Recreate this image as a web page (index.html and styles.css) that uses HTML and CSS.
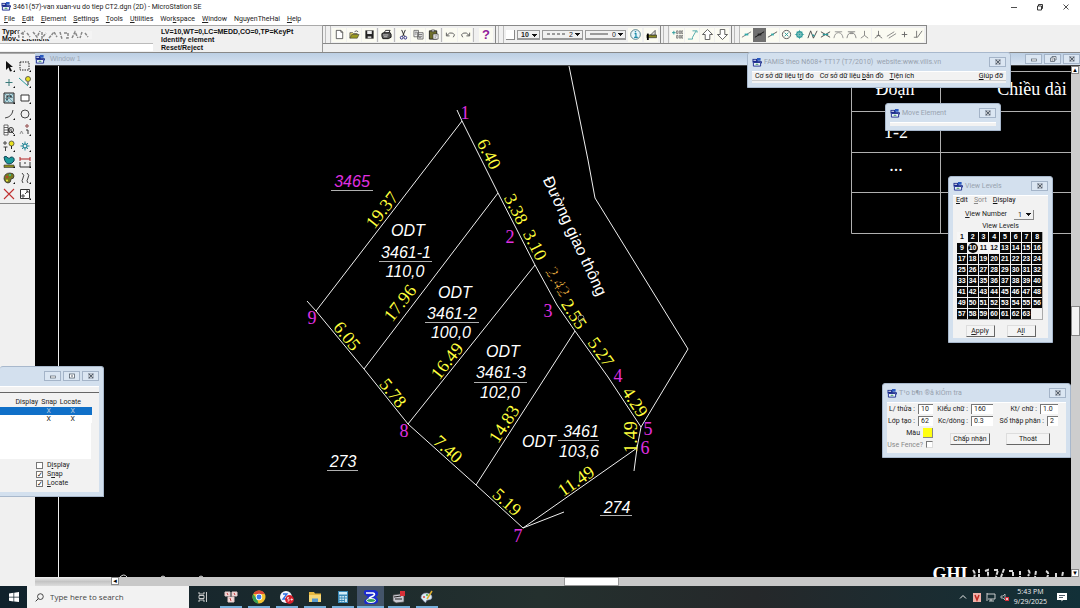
FILE: index.html
```html
<!DOCTYPE html>
<html lang="vi">
<head>
<meta charset="utf-8">
<title>3461(57)-van xuan-vu do tiep CT2.dgn (2D) - MicroStation SE</title>
<link rel="stylesheet" href="styles.css">
</head>
<body>
<svg class="defs" aria-hidden="true">
  <symbol id="logo" viewBox="0 0 10 10">
    <rect x="0" y="1" width="6" height="4" fill="#1a2a8c"/>
    <rect x="1" y="2" width="3" height="1" fill="#fff"/>
    <rect x="5" y="0" width="4" height="3" fill="#2a5ac0"/>
    <path d="M1 5h8v4H1z" fill="#e8eef8" stroke="#1a2a8c"/>
    <path d="M3 7.500l2-1.500 2 1.500z" fill="#2f9a50"/>
    <path d="M6 4h4v2" fill="none" stroke="#1a2a8c"/>
  </symbol>
  <symbol id="x" viewBox="0 0 8 8"><rect x="1.500" y="1.500" width="5" height="5" fill="#fff" stroke="#8a98a8" stroke-width=".6"/><path d="M2 2l4 4M6 2l-4 4" stroke="#56616e" stroke-width="1.100"/></symbol>
  <symbol id="min" viewBox="0 0 8 8"><rect x="1.500" y="4" width="5" height="2" fill="#fff" stroke="#56616e" stroke-width=".7"/></symbol>
  <symbol id="max" viewBox="0 0 8 8"><rect x="1.500" y="2" width="5" height="4" fill="#fff" stroke="#56616e" stroke-width=".8"/><path d="M3 4h2" stroke="#56616e"/></symbol>
  <symbol id="restore" viewBox="0 0 8 8"><path d="M3 3V1.500h4V5H5.500M1.500 3h4v3.500h-4z" fill="#fff" stroke="#56616e" stroke-width=".8"/><path d="M2.500 5h2" stroke="#56616e"/></symbol>
  <symbol id="corner" viewBox="0 0 16 16"><path d="M14 12v2h-2z" fill="#111"/></symbol>
</svg>

<div class="app">
  <header class="titlebar">
    <svg class="logo"><use href="#logo"/></svg>
    <h1 class="title">3461(57)-van xuan-vu do tiep CT2.dgn (2D) - MicroStation SE</h1>
    <button class="cap" aria-label="Minimize"><svg viewBox="0 0 8 8"><path d="M1 4.500h6" stroke="#222" stroke-width=".8"/></svg></button>
    <button class="cap" aria-label="Restore"><svg viewBox="0 0 8 8"><path d="M2.500 3V1.500h4v4H5.500M1.500 3h4v4h-4z" fill="none" stroke="#222" stroke-width=".9"/></svg></button>
    <button class="cap" aria-label="Close"><svg viewBox="0 0 8 8"><path d="M1.500 1.500l5 5M6.500 1.500l-5 5" stroke="#222" stroke-width=".8"/></svg></button>
  </header>

  <nav class="menubar">
    <button><u>F</u>ile</button><button><u>E</u>dit</button><button><u>E</u>lement</button><button><u>S</u>ettings</button><button><u>T</u>ools</button><button><u>U</u>tilities</button><button>Wor<u>k</u>space</button><button><u>W</u>indow</button><button>NguyenTheHai</button><button><u>H</u>elp</button>
  </nav>

  <div class="toolrow">
    <section class="command">
      <div class="keyin">
        <label for="keyin">Type:<br>Move Element</label>
        <svg class="noise" viewBox="0 0 76 12"><path d="M0 2h76v8H0z" fill="#f4f4f4"/><path d="M2 2l1 7M5 5l4-3M7 3v6M11 4l3 4M17 3l4 5 3-6M26 3v6l4-5M33 9l5-6 3 5M44 3l2 7M48 4h4v5h-3M56 9l3-6 3 6M66 3l-2 6M69 4l3 4" fill="none" stroke="#888" stroke-width="1.500" stroke-dasharray="3 1"/></svg>
        <input id="keyin" type="text">
      </div>
      <p class="status">LV=10,WT=0,LC=MEDD,CO=0,TP=KeyPt<br>Identify element<br>Reset/Reject</p>
    </section>
    <div class="bars">
      <div class="bar">
        <button aria-label="New"><svg viewBox="0 0 12 12"><path d="M2.500 1.500h5l2 2v7h-7zM7.500 1.500v2h2" fill="#fff" stroke="#333" stroke-width=".8"/></svg></button>
        <button aria-label="Open"><svg viewBox="0 0 12 12"><path d="M1 10V4h3l1 1h4v1" fill="#e8d860" stroke="#444" stroke-width=".8"/><path d="M1 10l2-4h8l-2 4z" fill="#9a9a20" stroke="#333" stroke-width=".6"/><path d="M6 3q2-2 4 0" fill="none" stroke="#333" stroke-width=".8"/></svg></button>
        <button aria-label="Save"><svg viewBox="0 0 12 12"><path d="M1.500 1.500h9v9h-9z" fill="#222"/><path d="M3.500 2h5v3.500h-5z" fill="#eee"/><path d="M4 8h4v2H4z" fill="#ccc"/></svg></button>
        <i></i>
        <button aria-label="Print"><svg viewBox="0 0 12 12"><path d="M3.500 4l1.500-2.500h5L8.500 4" fill="#fff" stroke="#222"/><path d="M1 5l2-1h7l1 2v3l-3 1.500H2L1 8z" fill="#555" stroke="#111"/><path d="M2 6.500h6M3 8.500h4" stroke="#eee" stroke-width=".8"/></svg></button>
        <i></i>
        <button aria-label="Cut"><svg viewBox="0 0 12 12"><path d="M4 1l3 7M8 1L5 8" stroke="#222" fill="none"/><circle cx="4" cy="9.500" r="1.500" fill="none" stroke="#22227c"/><circle cx="8" cy="9.500" r="1.500" fill="none" stroke="#22227c"/></svg></button>
        <button aria-label="Copy"><svg viewBox="0 0 12 12"><path d="M1 1.500h5v7H1zM5 4h6v7H5z" fill="#eee" stroke="#555" stroke-width=".8"/><path d="M2 3.500h3M2 5.500h2M6 6h4M6 8h4M6 9.500h3" stroke="#555" stroke-width=".8"/></svg></button>
        <button aria-label="Paste"><svg viewBox="0 0 12 12"><path d="M1.500 2h8v9h-8z" fill="#70702a" stroke="#222"/><path d="M4 1h3v2H4z" fill="#ddd" stroke="#222" stroke-width=".6"/><path d="M5.500 5.500h5.500V11H5.500z" fill="#fff" stroke="#333" stroke-width=".7"/><path d="M7 7.500h3M7 9h2" stroke="#555" stroke-width=".7"/></svg></button>
        <i></i>
        <button aria-label="Undo"><svg viewBox="0 0 12 12"><path d="M1.500 4v3.500H5M2 7q3-4 6.500-2.500T9 9" fill="none" stroke="#555"/></svg></button>
        <button aria-label="Redo"><svg viewBox="0 0 12 12"><path d="M10.500 4v3.500H7M10 7Q7 3 3.500 4.500T3 9" fill="none" stroke="#555"/></svg></button>
        <i></i>
        <button class="help" aria-label="Help">?</button>
      </div>
      <div class="bar attrs">
        <button class="swatch" aria-label="Color"></button>
        <select class="bold" aria-label="Level"><option>10</option></select>
        <label class="pick"><svg viewBox="0 0 20 4"><path d="M1 2h18" stroke="#444" stroke-dasharray="3 2"/></svg><select aria-label="Line style"><option>2</option></select></label>
        <label class="pick"><svg viewBox="0 0 20 4"><path d="M1 2h18" stroke="#444"/></svg><select aria-label="Line weight"><option>0</option></select></label>
        <button aria-label="Information"><svg viewBox="0 0 12 12"><circle cx="6" cy="6" r="5.300" fill="#e8f6fa" stroke="#2a5a6a" stroke-width=".8"/><path d="M5 5h1.500v4M4.500 9.200h4" stroke="#1a8aa8" stroke-width="1.300" fill="none"/><circle cx="6" cy="3" r=".9" fill="#1a8aa8"/></svg></button>
        <button aria-label="Match"><svg viewBox="0 0 12 12"><path d="M1 6.500h10.500v3H1z" fill="#8a8a20" stroke="#222" stroke-width=".7"/><path d="M5 6.500l5-5v5z" fill="#ddd" stroke="#333" stroke-width=".8"/><path d="M2 5v7" stroke="#000" stroke-width="2"/></svg></button>
      </div>
      <div class="bar draw">
        <button aria-label="Point list"><svg viewBox="0 0 12 12"><path d="M0 4h4M2 2v4" stroke="#2a9a9a"/><path d="M5 2h1.500v3H5zM8 2h1.500v3H8zM10.500 2H12v3h-1.500zM5 7h1.500v3H5zM8 7h1.500v3H8zM10.500 7H12v3h-1.500z" fill="none" stroke="#555" stroke-width=".7"/></svg></button>
        <button aria-label="Path"><svg viewBox="0 0 12 12"><path d="M1 11h5v-2M6 9l4-7M6 2h5v2" fill="none" stroke="#4aa8a8"/></svg></button>
        <button aria-label="Level up"><svg viewBox="0 0 12 12"><path d="M6 .5L11.500 6H8.500v5.500h-5V6H.5z" fill="#fff" stroke="#444" stroke-width=".9"/></svg></button>
        <button aria-label="Level down"><svg viewBox="0 0 12 12"><path d="M6 11.500L11.500 6H8.500V.5h-5V6H.5z" fill="#fff" stroke="#444" stroke-width=".9"/></svg></button>
      </div>
      <div class="bar snaps">
        <button aria-label="Nearest"><svg viewBox="0 0 12 12"><path d="M1 9l10-6" stroke="#777"/><path d="M4 6h4" stroke="#3aa" stroke-width="2"/></svg></button>
        <button class="on" aria-label="Keypoint"><svg viewBox="0 0 12 12"><path d="M1 9l10-6" stroke="#111"/><path d="M4 6h4" stroke="#222" stroke-width="2"/></svg></button>
        <button aria-label="Midpoint"><svg viewBox="0 0 12 12"><path d="M1 9l10-6" stroke="#555"/><path d="M4.500 6h3" stroke="#3aa" stroke-width="2"/></svg></button>
        <button aria-label="Center"><svg viewBox="0 0 12 12"><circle cx="6" cy="6" r="4.500" fill="none" stroke="#555"/><path d="M4 4l4 4M8 4L4 8" stroke="#2a9a9a"/></svg></button>
        <button aria-label="Origin"><svg viewBox="0 0 12 12"><circle cx="6" cy="6" r="3" fill="none" stroke="#2a9a9a" stroke-width="1.400"/><path d="M6 1v10M1 6h10M3 3l6 6M9 3L3 9" stroke="#2a9a9a" stroke-width=".7"/></svg></button>
        <button aria-label="Bisector"><svg viewBox="0 0 12 12"><path d="M1 10l3-8 3 8 4-8" fill="none" stroke="#444"/><path d="M6 6l2 2" stroke="#2a9a9a" stroke-width="1.500"/></svg></button>
        <button aria-label="Intersection"><svg viewBox="0 0 12 12"><path d="M1 3l10 6M1 9l10-6" stroke="#444"/><path d="M3 6h6" stroke="#2a9a9a" stroke-width="1.500"/></svg></button>
        <button aria-label="Tangent"><svg viewBox="0 0 12 12"><path d="M2 3h8M1 10q1-6 5-6t5 6" fill="none" stroke="#888" stroke-width=".9"/></svg></button>
        <button aria-label="Tangent from"><svg viewBox="0 0 12 12"><path d="M2 3h8M1 10q1-6 5-6t5 6M4 5h4" fill="none" stroke="#777" stroke-width=".9"/></svg></button>
        <button aria-label="Perpendicular"><svg viewBox="0 0 12 12"><path d="M6 2v5M6 7l-4 3M6 7l4 3" stroke="#777" stroke-width=".9"/></svg></button>
        <button aria-label="Perpendicular from"><svg viewBox="0 0 12 12"><path d="M6 2v5M6 7l-4 3M6 7l4 3M4 7h4" stroke="#666" stroke-width=".9"/></svg></button>
        <button aria-label="Parallel"><svg viewBox="0 0 12 12"><path d="M1 8l8-5M3 10l8-5" stroke="#777" stroke-width=".9"/></svg></button>
        <button aria-label="Through point"><svg viewBox="0 0 12 12"><path d="M6 3v6M3 6h6" stroke="#666"/></svg></button>
        <button aria-label="Point on"><svg viewBox="0 0 12 12"><path d="M2 9h4M5 2v7M6 9l5-7" stroke="#666" stroke-width=".9"/></svg></button>
      </div>
    </div>
  </div>

  <main class="work">
    <aside class="palette">
      <div class="tools">
        <button aria-label="Element selection"><svg viewBox="0 0 16 16"><path d="M5 3l7 6H9l2 4-2 .5-1.500-4L5 12z" fill="#111"/><use href="#corner"/></svg></button>
        <button aria-label="Fence"><svg viewBox="0 0 16 16"><path d="M3 4h9v8H3z" fill="none" stroke="#222" stroke-dasharray="1.500 1"/><use href="#corner"/></svg></button>
        <button aria-label="Points"><svg viewBox="0 0 16 16"><path d="M8 5v7M4.500 8.500h7" stroke="#3a7a7a"/><use href="#corner"/></svg></button>
        <button aria-label="Linear"><svg viewBox="0 0 16 16"><path d="M2 4l9 8" stroke="#2a9a9a"/><circle cx="11" cy="5" r="2.500" fill="#e8e020" stroke="#444" stroke-width=".8"/><path d="M11 8v3" stroke="#222"/><use href="#corner"/></svg></button>
        <button aria-label="Patterns"><svg viewBox="0 0 16 16"><path d="M3 3h10v10H3z" fill="#bcd8de" stroke="#222"/><path d="M4 4l8 8M4 8l4 4M8 4l4 4M12 4l-8 8" stroke="#4a8a9a" stroke-width=".7"/><path d="M6 10V6h4v2" fill="none" stroke="#222"/><use href="#corner"/></svg></button>
        <button aria-label="Polygons"><svg viewBox="0 0 16 16"><path d="M4 5h8v6H4z" fill="#fff" stroke="#333"/><use href="#corner"/></svg></button>
        <button aria-label="Arcs"><svg viewBox="0 0 16 16"><path d="M4 12q7-1 8-8" fill="none" stroke="#444"/><use href="#corner"/></svg></button>
        <button aria-label="Ellipses"><svg viewBox="0 0 16 16"><circle cx="8" cy="8" r="4" fill="none" stroke="#444"/><use href="#corner"/></svg></button>
        <button aria-label="Tags"><svg viewBox="0 0 16 16"><path d="M3 3h4v10H3zM3 5.500h4M3 8h4M3 10.500h4" fill="#fff" stroke="#444" stroke-width=".8"/><circle cx="10" cy="8" r="2.500" fill="none" stroke="#333"/><path d="M8 6v5M10 7v2l3 3" stroke="#333" fill="none"/><use href="#corner"/></svg></button>
        <button aria-label="Text"><svg viewBox="0 0 16 16"><path d="M3 12l1.500-3L6 12" fill="none" stroke="#777" stroke-width=".8"/><circle cx="10" cy="4" r="1.200" fill="none" stroke="#8a3a3a"/><path d="M9 8h2v4" stroke="#333" fill="none"/><use href="#corner"/></svg></button>
        <button aria-label="Groups"><svg viewBox="0 0 16 16"><path d="M4 3v4M2.500 9h4M4.500 9v4M2 5h4" stroke="#444"/><circle cx="10.500" cy="5.500" r="2.500" fill="#e8e020" stroke="#444" stroke-width=".8"/><path d="M10.500 8v3" stroke="#222"/><use href="#corner"/></svg></button>
        <button aria-label="Cells"><svg viewBox="0 0 16 16"><circle cx="8" cy="8" r="2" fill="none" stroke="#2a8a9a" stroke-width="1.300"/><path d="M8 3.500v2M8 10.500v2M3.500 8h2M10.500 8h2M5 5l1 1M11 5l-1 1M5 11l1-1M11 11l-1-1" stroke="#2a8a9a"/><use href="#corner"/></svg></button>
        <button aria-label="Measure"><svg viewBox="0 0 16 16"><path d="M3 3q2-2 4 1 1 1 3-1 4 0 3 4-2 3-5 3-4 0-5-7z" fill="#1a9a9a" stroke="#145"/><path d="M3 11h10v2.500H3z" fill="#8a8a20" stroke="#333" stroke-width=".6"/><use href="#corner"/></svg></button>
        <button aria-label="Dimension"><svg viewBox="0 0 16 16"><path d="M3 3v4M13 3v4M3 5h10" stroke="#b02020"/><path d="M3 8v5h10V8M8 8v2" fill="none" stroke="#333"/><use href="#corner"/></svg></button>
        <button aria-label="Change attributes"><svg viewBox="0 0 16 16"><path d="M3 9q0-6 6-6 4 0 4 3t-3 3q0 4-3 4T3 9z" fill="#7a7a20" stroke="#333" stroke-width=".8"/><circle cx="6" cy="7" r="1" fill="#c33"/><circle cx="9" cy="5" r="1" fill="#3c9"/><circle cx="6" cy="10.500" r="1" fill="#ee4"/><use href="#corner"/></svg></button>
        <button aria-label="Manipulate"><svg viewBox="0 0 16 16"><path d="M5 3q3 2 1 5t0 5M10 3q3 2 1 5t0 5" fill="none" stroke="#444"/><use href="#corner"/></svg></button>
        <button aria-label="Delete"><svg viewBox="0 0 16 16"><path d="M3 3l10 10M13 3L3 13" stroke="#c03030" stroke-width="1.100"/></svg></button>
        <button aria-label="Modify"><svg viewBox="0 0 16 16"><path d="M3.500 3.500h9v9h-9z" fill="#fff" stroke="#333"/><path d="M5 11h2V9H5zM8 8l3-3M9 5h2v2" fill="none" stroke="#333" stroke-width=".9"/><use href="#corner"/></svg></button>
      </div>
    </aside>

    <section class="view">
      <header class="viewbar">
        <svg class="logo"><use href="#logo"/></svg>
        <h2>Window 1</h2>
        <button class="wbtn" aria-label="Minimize"><svg><use href="#min"/></svg></button>
        <button class="wbtn" aria-label="Restore"><svg><use href="#restore"/></svg></button>
        <button class="wbtn" aria-label="Close"><svg><use href="#x"/></svg></button>
      </header>
      <div class="pane">
        <svg class="canvas" viewBox="35 66 1036 511" preserveAspectRatio="xMinYMin slice">
          <g class="lines">
            <path d="M58.500 66V577"/>
            <path d="M457 110L462 121L498 193L535 265L557 305L575 331L608 377L641 427L637 448L634 471"/>
            <path d="M569 66L588 160L595 198L688 349L641 427"/>
            <path d="M637 448L523 528L564 512M523 528L476 485L408 424L364 369L316 311L307 301"/>
            <path d="M462 121L316 311M498 193L364 369M535 265L408 424M575 331L476 485"/>
          </g>
          <g class="rules">
            <path d="M851.500 66V233.500H1071M940.500 66V233M851 71.500H1071M851 111.500H1071M851 152.500H1071M851 192.500H1071"/>
            <path d="M331 190.500H373M379 261.500H432M425 322.500H479M474 382.500H527M558 440.500H599M327 470.500H358M600 515.500H632"/>
          </g>
          <g class="dist">
            <text transform="translate(489 154) rotate(63)">6.40</text>
            <text transform="translate(516 209) rotate(63)">3.38</text>
            <text transform="translate(535 245) rotate(63)">3.10</text>
            <text class="faint" transform="translate(558 282) rotate(60)">2.42</text>
            <text transform="translate(574 314) rotate(57)">2.55</text>
            <text transform="translate(601 352) rotate(54)">5.27</text>
            <text transform="translate(635 402) rotate(57)">4.29</text>
            <text transform="translate(631 437) rotate(-90)">1.49</text>
            <text transform="translate(576 481) rotate(-35)">11.49</text>
            <text transform="translate(507 502) rotate(42)">5.19</text>
            <text transform="translate(448 449) rotate(42)">7.40</text>
            <text transform="translate(393 393) rotate(51)">5.78</text>
            <text transform="translate(347 336) rotate(51)">6.05</text>
            <text transform="translate(382 210) rotate(-52)">19.37</text>
            <text transform="translate(400 303) rotate(-52)">17.96</text>
            <text transform="translate(447 361) rotate(-52)">16.49</text>
            <text transform="translate(504 424) rotate(-57)">14.83</text>
          </g>
          <circle cx="581" cy="318" r="3" fill="none" stroke="#aaa" stroke-width=".7"/>
          <g class="points">
            <text x="465" y="119">1</text><text x="510" y="243">2</text><text x="548" y="317">3</text>
            <text x="618" y="382">4</text><text x="648" y="435">5</text><text x="645" y="454">6</text>
            <text x="518" y="542">7</text><text x="404" y="437">8</text><text x="312" y="324">9</text>
          </g>
          <g class="parcels">
            <text class="magenta" x="352" y="187">3465</text>
            <text x="408" y="236">ODT</text><text x="406" y="258">3461-1</text><text x="405" y="277">110,0</text>
            <text x="455" y="298">ODT</text><text x="452" y="319">3461-2</text><text x="451" y="338">100,0</text>
            <text x="503" y="357">ODT</text><text x="501" y="378">3461-3</text><text x="500" y="398">102,0</text>
            <text x="539" y="447">ODT</text><text x="581" y="437">3461</text><text x="579" y="457">103,6</text>
            <text x="343" y="467">273</text><text x="617" y="513">274</text>
          </g>
          <text class="road" transform="translate(575 236) rotate(65)">Đường giao thông</text>
          <g class="table">
            <text x="895" y="95">Đoạn</text><text x="1032" y="95">Chiều dài</text>
            <text x="896" y="138">1-2</text><text x="896" y="171">...</text>
            <text class="strong" x="950" y="580">GHI</text>
          </g>
          <path d="M973 570q3 4 1 7M979 569v8M985 571l3-1v7M994 570h4l-2 7M1004 569l-3 8M1009 571h4v6M1020 571v6M1028 570q3 2 0 6M1036 571l-1 6M1046 571q4 2 1 6M1056 573v4M1063 572l-1 5" fill="none" stroke="#d8d8d8" stroke-width="2" stroke-dasharray="4 1"/>
          <path d="M120 577q4-4 7 0M161 577q2-2 4 0M199 577q2-2 4 0" fill="none" stroke="#ddd"/>
        </svg>
        <div class="vscroll"><button aria-label="Scroll up">▴</button><span></span><button aria-label="Scroll down">▾</button></div>
        <div class="hscroll"><b class="viewctl"></b><button aria-label="Scroll left">◂</button><span></span></div>
      </div>
    </section>
  </main>

  <footer class="taskbar">
    <button class="start" aria-label="Start"><svg viewBox="0 0 10 10"><path d="M0 1.500l4.500-.7v4H0zM5.200.7L10 0v4.800H5.200zM0 5.400h4.500v4L0 8.700zM5.200 5.400H10V10l-4.800-.6z" fill="#fff"/></svg></button>
    <label class="search"><svg viewBox="0 0 10 10"><circle cx="6" cy="4" r="3.200" fill="none" stroke="#222" stroke-width=".9"/><path d="M3.700 6.300L.7 9.300" stroke="#222"/></svg><input type="text" placeholder="Type here to search" aria-label="Type here to search"></label>
    <button class="tview" aria-label="Task view"><svg viewBox="0 0 10 10"><path d="M1 0v2h5V0M1 10V8h5v2M1 3.500h5v3H1zM8.500 0v10" fill="none" stroke="#ddd" stroke-width=".9"/></svg></button>
    <div class="apps">
      <button aria-label="UniKey"><svg viewBox="0 0 14 14"><path d="M1 2h5v4H1zM8 2h5v4H8zM4 7h6v5H4z" fill="#f4dcdc" stroke="#e4c8c8"/><path d="M3 3l1 2M10 3l1 2M6 8l1 3" stroke="#c03a3a"/></svg></button>
      <button aria-label="Chrome"><svg viewBox="0 0 14 14"><circle cx="7" cy="7" r="6.500" fill="#f2c230"/><path d="M1.300 4A6.500 6.500 0 0 1 12.800 4H7z" fill="#dc4a38"/><path d="M1.300 4L5 9l1.500 4.500A6.500 6.500 0 0 1 1.300 4z" fill="#35a055"/><circle cx="7" cy="7" r="3.200" fill="#fff"/><circle cx="7" cy="7" r="2.400" fill="#3b7ded"/></svg></button>
      <button aria-label="Zalo"><svg viewBox="0 0 14 14"><circle cx="6" cy="7" r="6" fill="#f2f6ff"/><path d="M3 4h4L3 9h4" fill="none" stroke="#2a6ae0" stroke-width="1.300"/><circle cx="9.500" cy="9.500" r="4.400" fill="#d8202c"/><path d="M9 7.500H7.500V9H9v2H7.500M10.500 9.500h2.500M11.700 8.300v2.400" stroke="#fff" stroke-width=".7" fill="none"/></svg></button>
      <button aria-label="File Explorer"><svg viewBox="0 0 14 14"><path d="M1 2h5l1 1.500h6V12H1z" fill="#e8b840"/><path d="M1 5h12v7H1z" fill="#f8d878"/><path d="M4 8.500h6V12H4z" fill="#5a9ad0"/></svg></button>
      <button aria-label="Calculator"><svg viewBox="0 0 14 14"><path d="M2 1h10v12H2z" fill="#3a8ab8"/><path d="M3 2h8v2.500H3z" fill="#d0ecf8"/><path d="M3.500 6h2v1.500h-2zM6.200 6h2v1.500h-2zM9 6h2v1.500H9zM3.500 8.500h2V10h-2zM6.200 8.500h2V10h-2zM9 8.500h2V12H9zM3.500 11h2v1h-2zM6.200 11h2v1h-2z" fill="#c8e4f0"/></svg></button>
      <button class="active" aria-label="MicroStation"><svg viewBox="0 0 14 14"><path d="M2 0h9l3 2v3l-2 2 2 2v3l-3 2H1L0 11l4-4-4-3V1z" fill="#1a2ad0"/><path d="M2 3h7q3 1 0 3L5 8" fill="none" stroke="#fff" stroke-width="1.600"/><ellipse cx="7" cy="10.500" rx="4.500" ry="2" fill="#35a055" stroke="#fff"/></svg></button>
      <button aria-label="Recorder"><svg viewBox="0 0 14 14"><path d="M1 5l7-1 4 2v6l-8 1-3-2z" fill="#c8c8d0" stroke="#444" stroke-width=".7"/><path d="M2 7l7-1M3 9h7" stroke="#222"/><path d="M8 1h5v5H8z" fill="#d83038"/></svg></button>
      <button aria-label="Paint"><svg viewBox="0 0 14 14"><path d="M1 8q0-5 6-5 5 1 5 4t-4 3q-2 0-2 2T1 8z" fill="#d8ecf4" stroke="#88a" stroke-width=".6"/><circle cx="4" cy="7" r="1" fill="#d44"/><circle cx="7" cy="5" r="1" fill="#4a4"/><path d="M7 9l5-8" stroke="#e0b030" stroke-width="1.500"/></svg></button>
    </div>
    <div class="tray">
      <svg viewBox="0 0 10 10"><path d="M2 6.500l3-3 3 3" fill="none" stroke="#eee"/></svg>
      <svg viewBox="0 0 10 10"><rect x="1" y="1" width="8" height="9" fill="#f0b0a8"/><path d="M3 3l2 5 2-5" fill="none" stroke="#c02820" stroke-width="1.500"/></svg>
      <svg viewBox="0 0 10 10"><path d="M1 1v8M1 2h8v5H2M5 7v2M3 9h5" fill="none" stroke="#ddd" stroke-width=".9"/></svg>
      <svg viewBox="0 0 10 10"><path d="M1 4h2l2-2v6L3 6H1z" fill="none" stroke="#ccc" stroke-width=".8"/><rect x="5" y="5" width="4" height="4" fill="#d8303c"/><path d="M6 6l2 2M8 6L6 8" stroke="#fff" stroke-width=".7"/></svg>
      <time>5:43 PM<br>9/29/2025</time>
      <svg viewBox="0 0 10 10"><path d="M0 1h10v7H6L4.500 9.500V8H0z" fill="#fff"/><path d="M2 3.500h6M2 5.500h4" stroke="#234" stroke-width=".8"/></svg>
    </div>
  </footer>

  <section class="win famis">
    <header><svg class="logo"><use href="#logo"/></svg><h2>FAMIS theo N608+ TT17 (T7/2010)&nbsp; website:www.vilis.vn</h2><button class="wbtn" aria-label="Close"><svg><use href="#x"/></svg></button></header>
    <div class="body">
      <nav class="wmenu"><button>Cơ sở dữ liệu t<u>r</u>ị đo</button><button>Cơ sở dữ liệu <u>b</u>ản đồ</button><button><u>T</u>iện ích</button><button class="end"><u>G</u>iúp đỡ</button></nav>
    </div>
  </section>

  <section class="win move">
    <header><svg class="logo"><use href="#logo"/></svg><h2>Move Element</h2><button class="wbtn" aria-label="Close"><svg><use href="#x"/></svg></button></header>
    <div class="body"></div>
  </section>

  <section class="win levels">
    <header><svg class="logo"><use href="#logo"/></svg><h2>View Levels</h2><button class="wbtn" aria-label="Close"><svg><use href="#x"/></svg></button></header>
    <div class="body">
      <nav class="wmenu"><button><u>E</u>dit</button><button class="off"><u>S</u>ort</button><button><u>D</u>isplay</button></nav>
      <div class="vnum"><label for="vn"><u>V</u>iew Number</label><select id="vn"><option>1</option></select></div>
      <h3>View Levels</h3>
      <div class="grid">
        <button class="clear">1</button><button>2</button><button>3</button><button>4</button><button>5</button><button>6</button><button>7</button><button>8</button>
        <button>9</button><button class="current">10</button><button class="clear">11</button><button class="clear">12</button><button>13</button><button>14</button><button>15</button><button>16</button>
        <button>17</button><button>18</button><button>19</button><button>20</button><button>21</button><button>22</button><button>23</button><button>24</button>
        <button>25</button><button>26</button><button>27</button><button>28</button><button>29</button><button>30</button><button>31</button><button>32</button>
        <button>33</button><button>34</button><button>35</button><button>36</button><button>37</button><button>38</button><button>39</button><button>40</button>
        <button>41</button><button>42</button><button>43</button><button>44</button><button>45</button><button>46</button><button>47</button><button>48</button>
        <button>49</button><button>50</button><button>51</button><button>52</button><button>53</button><button>54</button><button>55</button><button>56</button>
        <button>57</button><button>58</button><button>59</button><button>60</button><button>61</button><button>62</button><button>63</button>
      </div>
      <div class="actions"><button class="push"><u>A</u>pply</button><button class="push">A<u>l</u>l</button></div>
    </div>
  </section>

  <section class="win label">
    <header><svg class="logo"><use href="#logo"/></svg><h2>T¹o b¶n ®å kiÓm tra</h2><button class="wbtn" aria-label="Close"><svg><use href="#x"/></svg></button></header>
    <form class="body">
      <div class="col">
        <label>L/ thửa :<input type="text" value="10"></label>
        <label>Lớp tạo :<input type="text" value="62"></label>
        <label>Màu<button type="button" class="yellow" aria-label="Màu"></button></label>
        <label class="off">Use Fence?<input type="checkbox"></label>
      </div>
      <div class="col mid">
        <label>Kiểu chữ :<input type="text" value="160"></label>
        <label>Kc/dòng :<input type="text" value="0.3"></label>
        <button type="button" class="push">Chấp nhận</button>
      </div>
      <div class="col last">
        <label>Kt/ chữ :<input type="text" value="1.0"></label>
        <label>Số thập phân :<input type="text" value="2"></label>
        <button type="button" class="push">Thoát</button>
      </div>
    </form>
  </section>

  <section class="win refs">
    <header><button class="wbtn" aria-label="Minimize"><svg><use href="#min"/></svg></button><button class="wbtn" aria-label="Maximize"><svg><use href="#max"/></svg></button><button class="wbtn" aria-label="Close"><svg><use href="#x"/></svg></button></header>
    <div class="body">
      <table>
        <thead><tr><th>Display</th><th>Snap</th><th>Locate</th></tr></thead>
        <tbody>
          <tr class="sel"><td></td><td>X</td><td>X</td></tr>
          <tr><td></td><td>X</td><td>X</td></tr>
        </tbody>
      </table>
      <div class="checks">
        <label><input type="checkbox"><span>D<u>i</u>splay</span></label>
        <label><input type="checkbox" checked><span>S<u>n</u>ap</span></label>
        <label><input type="checkbox" checked><span><u>L</u>ocate</span></label>
      </div>
    </div>
  </section>
</div>
</body>
</html>
```
FILE: styles.css
```css
* { box-sizing: border-box; }

body {
  margin: 0;
  font: 7px/8px "Liberation Sans", Arial, sans-serif;
  color: #222;
}

button, input, select {
  margin: 0;
  padding: 0;
  border: 0;
  border-radius: 0;
  background: none;
  color: inherit;
  font: inherit;
}

select { appearance: none; }
h1, h2, h3, p { margin: 0; font: inherit; }
svg { display: block; }
u { text-underline-offset: 1px; text-decoration-thickness: 1px; }
.defs { position: absolute; width: 0; height: 0; }

.app {
  position: relative;
  display: flex;
  flex-direction: column;
  height: 100vh;
  overflow: hidden;
  background: #f0f0f0;
}

.logo { flex: none; width: 10px; height: 9px; }

/* title and menu */
.titlebar {
  display: flex;
  flex: none;
  align-items: center;
  height: 13px;
  padding: 0 8px 0 1px;
  gap: 2px;
  background: #fff;
}
.title { flex: 1; font-family: Roboto, sans-serif; white-space: nowrap; }
.cap { width: 10px; margin-left: 14px; }
.cap svg { width: 8px; height: 8px; }

.menubar {
  display: flex;
  flex: none;
  height: 12px;
  padding: 0 4px;
  gap: 7px;
  background: #fff;
  font-family: Roboto, sans-serif;
}

/* command window and tool bars */
.toolrow { display: flex; flex: none; height: 28px; border-bottom: 1px solid #888; }
.command {
  display: flex;
  flex: none;
  width: 323px;
  border-top: 1px solid #aaa;
  border-right: 1px solid #999;
  font-weight: bold;
  color: #111;
}
.keyin { position: relative; width: 153px; }
.keyin label { display: block; height: 17px; padding: 2px; line-height: 7px; }
.keyin input { display: block; width: 100%; height: 8px; background: #fff; border-top: 1px solid #bbb; }
.noise { position: absolute; left: 16px; top: 3px; width: 76px; height: 12px; }
.status { padding: 2px 8px; white-space: nowrap; }

.bars {
  display: flex;
  flex: 1;
  height: 19px;
  margin-right: 153px;
  border: solid #888;
  border-width: 1px 0;
}
.bar {
  display: flex;
  flex: none;
  align-items: center;
  gap: 1px;
  height: 17px;
  padding: 0 2px;
  border-right: 1px solid #888;
}
.bar::before { content: ""; width: 4px; height: 17px; border: solid #bbb; border-width: 0 1px; }
.bar button { display: grid; place-items: center; width: 14px; height: 14px; background: #fbfbf2; }
.bar > button svg { width: 11px; height: 11px; }
.bar i { width: 1px; height: 14px; background: #bbb; }
.bar .help { color: #90209a; font: bold 13px/14px "Liberation Sans", sans-serif; margin-left: 4px; }
.attrs { gap: 2px; }
.bar .swatch { width: 9px; height: 10px; background: #fff; border: solid #888; border-width: 0 1px 1px 0; }
.attrs > select, .pick {
  display: flex;
  align-items: center;
  width: 23px;
  height: 10px;
  padding-left: 3px;
  border: 1px solid #999;
  border-bottom-width: 2px;
}
.attrs > select, .pick select, .vnum select {
  background-image: linear-gradient(#111, #111), linear-gradient(#111, #111), linear-gradient(#111, #111);
  background-size: 5px 1px, 3px 1px, 1px 1px;
  background-position: right 2px top 3px, right 3px top 4px, right 4px top 5px;
  background-repeat: no-repeat;
}
.attrs .bold { font-weight: bold; }
.pick { width: 41px; }
.pick svg { width: 20px; height: 4px; }
.pick select { flex: 1; height: 8px; padding-left: 3px; line-height: 7px; }
.snaps { gap: 0; flex: 1; justify-content: space-between; }
.snaps button { width: 13px; flex-shrink: 1; }
.snaps .on { background: #707070; }

/* work area */
.work { display: flex; flex: 1; min-height: 0; }
.palette { flex: none; width: 35px; }
.tools { display: grid; grid-template-columns: 16px 16px; padding: 4px 1px 1px; border-top: 1px solid #aaa; border-bottom: 1px solid #888; }
.tools button { height: 16px; }
.tools svg { width: 16px; height: 16px; }

.view { display: flex; flex-direction: column; flex: 1; min-width: 0; }
.viewbar {
  display: flex;
  flex: none;
  align-items: center;
  gap: 2px;
  height: 13px;
  background: linear-gradient(#bccfe4, #d6e2f0);
  border-bottom: 1px solid #444;
  color: #9aa6b4;
}
.viewbar h2 { flex: 1; padding-left: 3px; }
.wbtn {
  display: grid;
  place-items: center;
  flex: none;
  width: 17px;
  height: 10px;
  border: 1px solid #a4b4c8;
  background: #dbe6f2;
}
.wbtn svg { width: 8px; height: 8px; }

.pane { display: grid; grid-template: 1fr 9px / 1fr 9px; flex: 1; min-height: 0; }
.canvas { width: 100%; height: 100%; min-height: 0; background: #000; overflow: hidden; }
.vscroll { display: flex; flex-direction: column; background: #cdcdcd; }
.vscroll button, .hscroll button { width: 8px; height: 8px; background: #fff; border: 1px solid #888; font: 7px/6px "DejaVu Sans", sans-serif; color: #000; }
.vscroll span { height: 30px; margin-top: 232px; background: #f4f4f4; border: 1px solid #888; }
.vscroll button:last-child { margin-top: auto; }
.hscroll { display: flex; grid-column: 1 / 3; background: #c8c8c8; }
.viewctl { width: 76px; background: linear-gradient(#eee, #c4c4c4, #ddd); }
.hscroll span { width: 55px; margin-left: 445px; background: #fff; border: 1px solid #999; }

/* drawing */
.lines { fill: none; stroke: #f0f0f0; stroke-width: 1; }
.rules { fill: none; stroke: #b0b0b0; stroke-width: 1; }
.dist text, .points text, .table text { font: 18px "Liberation Serif", "Times New Roman", serif; text-anchor: middle; }
.dist text { fill: #ffff3c; dominant-baseline: central; }
.dist .faint { fill: #f0b040; stroke: #000; stroke-width: 1; stroke-dasharray: 2 2; }
.points text { fill: #e030e0; }
.parcels text { font: italic 16px "Liberation Sans", Arial, sans-serif; fill: #fff; text-anchor: middle; }
.parcels .magenta { fill: #e030e0; }
.road { font: 16px "Liberation Sans", Arial, sans-serif; fill: #fff; text-anchor: middle; dominant-baseline: central; }
.table text { fill: #fff; }
.table .strong { font-weight: bold; }

/* floating windows */
.win {
  position: absolute;
  display: flex;
  flex-direction: column;
  padding: 0 4px 4px;
  border: 1px solid #a8b8cc;
  border-radius: 3px 3px 0 0;
  background: #d3e0ee;
  font-family: Roboto, "Liberation Sans", sans-serif;
}
.win > header {
  display: flex;
  align-items: center;
  gap: 2px;
  height: 18px;
  color: #98a2ae;
}
.win h2 { flex: 1; white-space: nowrap; }
.win .body { flex: 1; background: #f2f2f2; border-top: 1px solid #fff; }
.wmenu { display: flex; gap: 6px; padding: 0 3px; color: #111; }
.wmenu .end { margin-left: auto; }
.off { color: #888; }
.push { height: 12px; border: 1px solid #ddd; border-right-color: #666; border-bottom-color: #666; background: #f4f4f4; }

.famis { left: 747px; top: 52px; width: 264px; height: 36px; }
.famis .wmenu { border-bottom: 1px solid #ccc; height: 9px; }
.move { left: 885px; top: 103px; width: 116px; height: 28px; }

.levels { left: 948px; top: 176px; width: 105px; height: 167px; }
.vnum { display: flex; justify-content: flex-end; gap: 7px; padding: 6px 14px 0 0; }
.vnum select { width: 20px; height: 10px; padding-left: 4px; border: solid #888; border-width: 0 1px 1px 0; }
.levels h3 { margin-top: 2px; text-align: center; line-height: 9px; }
.grid {
  display: grid;
  grid-template-columns: repeat(8, 1fr);
  gap: 1px;
  margin: 1px 5px 0 4px;
  background: #f2f2f2;
  border: solid #aaa;
  border-width: 0 1px 1px 0;
  font: bold 7px/10px "Liberation Sans", sans-serif;
}
.grid button { height: 10px; background: #080808; color: #fff; }
.grid .clear { background: #f6f6f6; color: #111; }
.grid .current { border-radius: 50%; }
.actions { display: flex; gap: 12px; justify-content: center; padding-top: 5px; }
.actions .push { width: 29px; }

.label { left: 882px; top: 383px; width: 189px; height: 75px; }
.label .body { display: flex; gap: 6px; padding: 2px 2px 0; }
.col { display: flex; flex-direction: column; align-items: flex-end; gap: 1px; width: 44px; }
.col label { display: flex; align-items: center; gap: 3px; height: 11px; white-space: nowrap; }
.col input { width: 15px; height: 10px; padding-left: 2px; background: #fff; border: solid #777; border-width: 1px 0 0 1px; }
.col input[type="checkbox"] { appearance: none; width: 7px; height: 7px; border-width: 1px; border-color: #777 #ddd #ddd #777; }
.yellow { width: 10px; height: 10px; background: #ffff10; border: solid #888; border-width: 0 1px 1px 0; }
.col.mid { width: 54px; }
.col.mid input { width: 22px; }
.col .push { width: 40px; margin: 6px 3px 0 0; }
.col.last { flex: 1; padding-right: 6px; }
.col.last input { width: 18px; }
.col.last .push { width: 44px; margin-right: 8px; }
.col.last label + label input { width: 11px; }
.label .body { padding-top: 0; }

.refs { left: 0; top: 366px; width: 104px; height: 131px; padding-left: 0; border-left: 0; }
.refs > header { justify-content: flex-end; gap: 2px; height: 19px; padding-bottom: 1px; }
.refs .body { padding: 5px 8px 0 0; }
.refs .body::before { content: ""; display: block; height: 1px; margin: 0 -8px 4px 0; background: #666; }
.refs table { width: 92px; border-collapse: collapse; }
.refs th { padding: 0; font-weight: normal; text-align: right; height: 10px; }
.refs th:first-child { width: 38px; }
.refs th:nth-child(2) { width: 19px; }
.refs th:last-child { padding-right: 11px; }
.refs td { padding: 0 6px 0 0; height: 8px; text-align: right; }
.refs td:last-child { padding-right: 17px; }
.refs tbody { background: #fff; }
.refs .sel td { background: #1070c8; color: #bcd; }
.checks { display: grid; gap: 1px; padding: 38px 0 0 36px; background: linear-gradient(#fff, #fff) no-repeat; background-size: 100% 36px; }
.checks label { display: flex; align-items: center; gap: 4px; height: 8px; }
.checks input { appearance: none; display: grid; place-items: center; width: 7px; height: 7px; background: #fff; border: 1px solid #777; }
.checks input:checked::before { content: "✓"; font: bold 7px/6px "DejaVu Sans", sans-serif; color: #111; }

/* task bar */
.taskbar {
  display: flex;
  flex: none;
  height: 22px;
  background: linear-gradient(90deg, #10222c, #24302e 50%, #25282a 70%, #123038);
  color: #eee;
  font-family: "Open Sans", "Noto Sans", sans-serif;
}
.start { display: grid; place-items: center; width: 27px; }
.start svg { width: 10px; height: 10px; }
.search { display: flex; align-items: center; gap: 6px; width: 162px; padding: 0 8px; background: #f2f2f2; }
.search svg { width: 9px; height: 9px; }
.search input { flex: 1; min-width: 0; font-size: 8px; line-height: 12px; }
.search input::placeholder { color: #444; opacity: 1; }
.tview { display: grid; place-items: center; width: 27px; }
.tview svg { width: 10px; height: 10px; }
.apps { display: flex; gap: 1px; padding-left: 1px; }
.apps button { display: grid; place-items: center; width: 27px; padding-bottom: 1px; background: linear-gradient(#76b0dc, #76b0dc) center bottom / 22px 2px no-repeat; }
.apps .active { background-color: #44546a; background-size: 27px 2px; }
.apps svg { width: 14px; height: 14px; }
.tray { display: flex; align-items: center; gap: 4px; margin-left: auto; padding-right: 13px; font-size: 7px; line-height: 10px; text-align: center; }
.tray svg { width: 10px; height: 10px; }
.tray time { margin-right: 6px; }
```
